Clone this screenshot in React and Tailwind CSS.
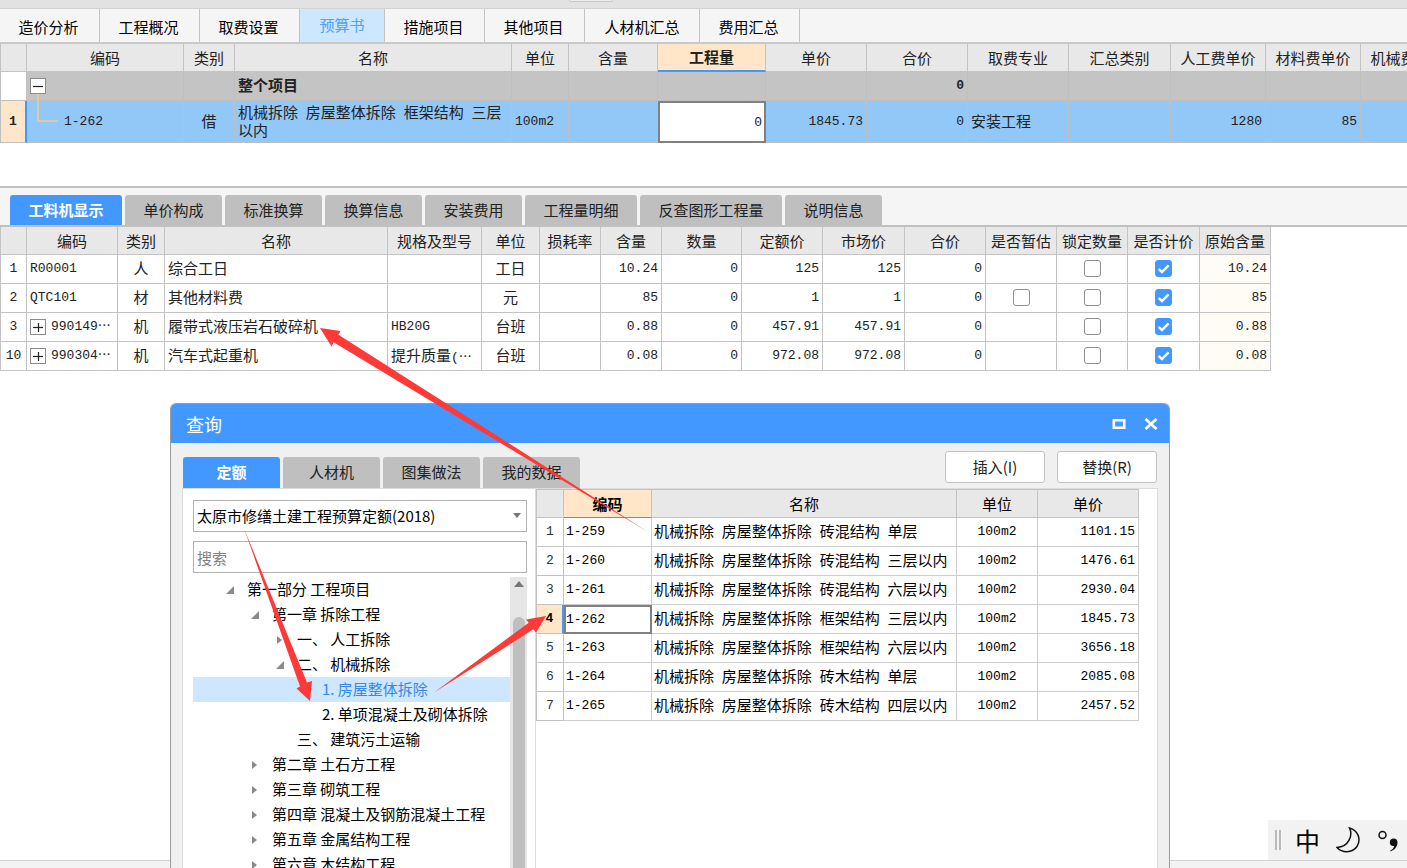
import React, { useState } from "react";

const UI = "font-['Noto_Sans_CJK_SC',sans-serif]";
const GRID = "font-['Liberation_Mono','Noto_Sans_CJK_SC',monospace] text-[13px]";

/* Latin runs use the narrow grid face, Chinese runs the larger UI face. */
function Mixed({ text }) {
  const runs = String(text).match(/[\u2e80-\uffff]+|[^\u2e80-\uffff]+/g) || [];
  return runs.map((run, i) =>
    /[\u2e80-\uffff]/.test(run) ? (
      <span key={i} className="font-['Noto_Sans_CJK_SC',sans-serif] text-[15px]">{run}</span>
    ) : (
      <React.Fragment key={i}>{run}</React.Fragment>
    )
  );
}

function Cols({ widths }) {
  return (
    <colgroup>
      {widths.map((w, i) => (
        <col key={i} style={{ width: w }} />
      ))}
    </colgroup>
  );
}

function Expander({ open, label }) {
  return (
    <button type="button" aria-label={label} className="grid size-4 shrink-0 place-items-center border border-[#8c8c8c] bg-white">
      <svg viewBox="0 0 10 10" className="size-[10px]" stroke="#222" strokeWidth="1.2">
        <path d="M0 5.5h10" />
        {!open && <path d="M5.5 1v9" />}
      </svg>
    </button>
  );
}

function Tick({ on, label }) {
  const [checked, setChecked] = useState(on);
  return (
    <label className="relative inline-grid size-[17px] place-items-center align-middle">
      <input
        type="checkbox"
        aria-label={label}
        checked={checked}
        onChange={() => setChecked(!checked)}
        className="size-[17px] appearance-none rounded-[3px] border border-[#8f8f8f] bg-white checked:border-[#4398ff] checked:bg-[#4398ff]"
      />
      {checked && (
        <svg viewBox="0 0 17 17" className="pointer-events-none absolute inset-0 size-[17px]" fill="none" stroke="#fff" strokeWidth="2.4">
          <path d="M3.6 8.8 7 12l6.6-6.6" />
        </svg>
      )}
    </label>
  );
}

const topTabs = ["造价分析", "工程概况", "取费设置", "预算书", "措施项目", "其他项目", "人材机汇总", "费用汇总"];
const budgetHead = ["", "编码", "类别", "名称", "单位", "含量", "工程量", "单价", "合价", "取费专业", "汇总类别", "人工费单价", "材料费单价", "机械费单价"];
const budgetCols = [27, 157, 51, 277, 57, 89, 108, 101, 101, 101, 102, 95, 95, 95];

function BudgetTable() {
  const c = "border-r border-b border-[#bfbfbf]";
  return (
    <div className="shrink-0 overflow-hidden">
      <table className={`w-[1456px] table-fixed border-separate border-spacing-0 text-[#222] ${GRID}`}>
        <Cols widths={budgetCols} />
        <thead>
          <tr className="h-[28px]">
            {budgetHead.map((h, i) => (
              <th
                key={i}
                className={`border-r whitespace-nowrap p-0 pt-[2px] ${
                  h === "工程量" ? "border-b-2 border-r-[#c3c3c3] border-b-[#4398ff] bg-[#ffe6c8] font-bold" : "border-b border-[#c3c3c3] bg-[#e8e8e8] font-normal"
                } ${i === 0 ? "border-l" : ""}`}
              >
                <Mixed text={h} />
              </th>
            ))}
          </tr>
        </thead>
        <tbody>
          <tr className="h-[29px] bg-[#c4c4c4] font-bold">
            <td className={`${c} border-l bg-white p-0`} />
            <td className={`${c} relative p-0 pl-[3px]`}>
              <Expander open label="折叠" />
              <svg className="pointer-events-none absolute top-[22px] left-[10px] h-8 w-6" fill="none" stroke="#f3c98c" strokeWidth="1.5">
                <path d="M1 0v27h20" />
              </svg>
            </td>
            <td className={c} />
            <td className={`${c} p-0 pl-[3px]`}><Mixed text="整个项目" /></td>
            <td className={c} />
            <td className={c} />
            <td className={c} />
            <td className={c} />
            <td className={`${c} p-0 pr-[3px] text-right`}>0</td>
            <td className={c} />
            <td className={c} />
            <td className={c} />
            <td className={c} />
            <td className={c} />
          </tr>
          <tr className="h-[42px] bg-[#92c8f7]">
            <td className="border-x border-r-2 border-b border-[#bfbfbf] border-r-[#4398ff] bg-[#ffe6c8] p-0 text-center font-bold">1</td>
            <td className={`${c} p-0 pl-[37px]`}>1-262</td>
            <td className={`${c} p-0 text-center`}><Mixed text="借" /></td>
            <td className={`${c} p-0 pl-[3px] leading-[15px]`}><Mixed text="机械拆除 房屋整体拆除 框架结构 三层以内" /></td>
            <td className={`${c} p-0 pl-[3px]`}>100m2</td>
            <td className={c} />
            <td className="p-0">
              <input aria-label="工程量" defaultValue="0" className="block h-[42px] w-full border-2 border-[#808080] bg-white pr-[2px] text-right outline-none" />
            </td>
            <td className={`${c} p-0 pr-[3px] text-right`}>1845.73</td>
            <td className={`${c} p-0 pr-[3px] text-right`}>0</td>
            <td className={`${c} p-0 pl-[3px]`}><Mixed text="安装工程" /></td>
            <td className={c} />
            <td className={`${c} p-0 pr-[3px] text-right`}>1280</td>
            <td className={`${c} p-0 pr-[3px] text-right`}>85</td>
            <td className={c} />
          </tr>
        </tbody>
      </table>
    </div>
  );
}

const detailTabs = [
  ["工料机显示", "w-[112px]"],
  ["单价构成", "w-[97px]"],
  ["标准换算", "w-[97px]"],
  ["换算信息", "w-[97px]"],
  ["安装费用", "w-[97px]"],
  ["工程量明细", "w-[112px]"],
  ["反查图形工程量", "w-[142px]"],
  ["说明信息", "w-[97px]"],
];
const detailHead = ["", "编码", "类别", "名称", "规格及型号", "单位", "损耗率", "含量", "数量", "定额价", "市场价", "合价", "是否暂估", "锁定数量", "是否计价", "原始含量"];
const detailCols = [27, 91, 47, 223, 94, 58, 61, 61, 80, 81, 82, 81, 71, 71, 72, 71];
const detailRows = [
  { n: 1, code: "R00001", kind: "人", name: "综合工日", spec: "", unit: "工日", qty: "10.24", p: "125" },
  { n: 2, code: "QTC101", kind: "材", name: "其他材料费", spec: "", unit: "元", qty: "85", p: "1", est: true },
  { n: 3, code: "990149⋯", kind: "机", name: "履带式液压岩石破碎机", spec: "HB20G", unit: "台班", qty: "0.88", p: "457.91", tree: true },
  { n: 10, code: "990304⋯", kind: "机", name: "汽车式起重机", spec: "提升质量(⋯", unit: "台班", qty: "0.08", p: "972.08", tree: true },
];

function DetailTable() {
  const c = "border-r border-b border-[#c3c3c3] p-0 whitespace-nowrap overflow-hidden";
  const num = `${c} pr-[3px] text-right`;
  return (
    <table className={`w-[1271px] shrink-0 table-fixed border-separate border-spacing-0 text-[#222] ${GRID}`}>
      <Cols widths={detailCols} />
      <thead>
        <tr className="h-[28px] bg-[#e8e8e8]">
          {detailHead.map((h, i) => (
            <th key={i} className={`${c} pt-[2px] font-normal ${i === 0 ? "border-l" : ""}`}><Mixed text={h} /></th>
          ))}
        </tr>
      </thead>
      <tbody>
        {detailRows.map((r) => (
          <tr key={r.n} className="h-[29px]">
            <td className={`${c} border-l text-center`}>{r.n}</td>
            <td className={`${c} pl-[3px]`}>
              <div className="flex items-center gap-[5px]">
                {r.tree && <Expander label="展开" />}
                {r.code}
              </div>
            </td>
            <td className={`${c} text-center`}><Mixed text={r.kind} /></td>
            <td className={`${c} pl-[3px]`}><Mixed text={r.name} /></td>
            <td className={`${c} pl-[3px]`}><Mixed text={r.spec} /></td>
            <td className={`${c} text-center`}><Mixed text={r.unit} /></td>
            <td className={c} />
            <td className={num}>{r.qty}</td>
            <td className={num}>0</td>
            <td className={num}>{r.p}</td>
            <td className={num}>{r.p}</td>
            <td className={num}>0</td>
            <td className={`${c} text-center`}>{r.est && <Tick label="是否暂估" on={false} />}</td>
            <td className={`${c} text-center`}><Tick label="锁定数量" on={false} /></td>
            <td className={`${c} text-center`}><Tick label="是否计价" on={true} /></td>
            <td className={`${num} bg-[#fffbf5]`}>{r.qty}</td>
          </tr>
        ))}
      </tbody>
    </table>
  );
}

const tree = [
  { t: "第一部分 工程项目", pad: "pl-8", a: "open" },
  { t: "第一章 拆除工程", pad: "pl-[57px]", a: "open" },
  { t: "一、 人工拆除", pad: "pl-[82px]", a: "closed" },
  { t: "二、 机械拆除", pad: "pl-[82px]", a: "open" },
  { t: "1. 房屋整体拆除", pad: "pl-[107px]", sel: true },
  { t: "2. 单项混凝土及砌体拆除", pad: "pl-[107px]" },
  { t: "三、 建筑污土运输", pad: "pl-[82px]" },
  { t: "第二章 土石方工程", pad: "pl-[57px]", a: "closed" },
  { t: "第三章 砌筑工程", pad: "pl-[57px]", a: "closed" },
  { t: "第四章 混凝土及钢筋混凝土工程", pad: "pl-[57px]", a: "closed" },
  { t: "第五章 金属结构工程", pad: "pl-[57px]", a: "closed" },
  { t: "第六章 木结构工程", pad: "pl-[57px]", a: "closed" },
];

function TreeArrow({ state }) {
  return (
    <svg viewBox="0 0 10 10" className="size-[10px] shrink-0" fill="#8a8a8a">
      {state === "open" && <path d="M9 1v8H1z" />}
      {state === "closed" && <path d="M2 1l5 4-5 4z" />}
    </svg>
  );
}

const quotaRows = [
  ["1-259", "机械拆除 房屋整体拆除 砖混结构 单层", "1101.15"],
  ["1-260", "机械拆除 房屋整体拆除 砖混结构 三层以内", "1476.61"],
  ["1-261", "机械拆除 房屋整体拆除 砖混结构 六层以内", "2930.04"],
  ["1-262", "机械拆除 房屋整体拆除 框架结构 三层以内", "1845.73"],
  ["1-263", "机械拆除 房屋整体拆除 框架结构 六层以内", "3656.18"],
  ["1-264", "机械拆除 房屋整体拆除 砖木结构 单层", "2085.08"],
  ["1-265", "机械拆除 房屋整体拆除 砖木结构 四层以内", "2457.52"],
];

function QuotaTable() {
  const c = "border-r border-b border-[#cdcdcd] p-0 whitespace-nowrap";
  return (
    <table className={`w-[603px] table-fixed border-separate border-spacing-0 text-black ${GRID}`}>
      <Cols widths={[28, 88, 305, 81, 101]} />
      <thead>
        <tr className="h-[29px] bg-[#e8e8e8]">
          {["", "编码", "名称", "单位", "单价"].map((h, i) => (
            <th
              key={i}
              className={`border-t border-r border-b p-0 pt-[2px] ${
                i === 1 ? "border-[#c3c3c3] border-b-[#4398ff] bg-[#ffe6c8] font-bold" : "border-[#c3c3c3] font-normal"
              } ${i === 0 ? "border-l" : ""}`}
            >
              <Mixed text={h} />
            </th>
          ))}
        </tr>
      </thead>
      <tbody>
        {quotaRows.map(([code, name, price], i) => {
          const sel = code === "1-262";
          return (
            <tr key={code} className="h-[29px]">
              <td
                className={`border-b border-l border-[#c3c3c3] p-0 text-center ${
                  sel ? "border-r-2 border-r-[#4398ff] bg-[#ffe6c8] font-bold" : "border-r text-[#333]"
                }`}
              >
                {i + 1}
              </td>
              <td className={sel ? "border-2 border-[#808080] p-0" : `${c} pl-[2px]`}>{code}</td>
              <td className={`${c} pl-[2px]`}><Mixed text={name} /></td>
              <td className={`${c} text-center`}>100m2</td>
              <td className={`${c} pr-[3px] text-right`}>{price}</td>
            </tr>
          );
        })}
      </tbody>
    </table>
  );
}

function QueryDialog() {
  return (
    <section
      role="dialog"
      aria-label="查询"
      className="absolute top-[403px] bottom-0 left-[170px] flex w-[1000px] flex-col overflow-hidden rounded-t-md border-x border-t border-[#9c9c9c] bg-[#f0f0f0]"
    >
      <header className="flex h-[39px] shrink-0 items-center bg-[#4398ff] pr-[11px] pl-[15px] text-white">
        <h2 className="grow text-lg">查询</h2>
        <button type="button" aria-label="最大化" className="mr-[18px]">
          <svg viewBox="0 0 14 14" className="size-[14px]" fill="none" stroke="#fff" strokeWidth="2.6">
            <path d="M1.800 3.300h10.400v7.400H1.800z" />
          </svg>
        </button>
        <button type="button" aria-label="关闭">
          <svg viewBox="0 0 14 14" className="size-[14px]" stroke="#fff" strokeWidth="2.8">
            <path d="M1.5 2l11 10M12.5 2l-11 10" />
          </svg>
        </button>
      </header>
      <div className="flex h-[45px] shrink-0 items-end gap-[3px] px-3 text-[15px]">
        {["定额", "人材机", "图集做法", "我的数据"].map((t, i) => (
          <button
            key={t}
            type="button"
            className={`h-[31px] w-[97px] rounded-t-[3px] ${i === 0 ? "bg-[#4398ff] font-bold text-white" : "bg-[#bfbfbf] text-[#222]"}`}
          >
            {t}
          </button>
        ))}
        <div className="mb-[5px] ml-auto flex gap-3">
          <button type="button" className="h-8 w-[100px] rounded-[3px] border border-[#c3c3c3] bg-white text-[#222]">插入(I)</button>
          <button type="button" className="h-8 w-[100px] rounded-[3px] border border-[#c3c3c3] bg-white text-[#222]">替换(R)</button>
        </div>
      </div>
      <div className="mx-[11px] flex min-h-0 grow border-x border-t border-[#dcdcdc] bg-white">
        <div className="flex w-[352px] shrink-0 flex-col pt-[11px] pr-2 pl-[10px] text-[15px]">
          <div className="relative shrink-0">
            <select aria-label="定额库" className="block h-8 w-full appearance-none border border-[#b3b3b3] bg-white pl-[3px] text-black outline-none">
              <option>太原市修缮土建工程预算定额(2018)</option>
            </select>
            <svg viewBox="0 0 8 5" className="pointer-events-none absolute top-[13px] right-[6px] h-[5px] w-2" fill="#777">
              <path d="M0 0h8L4 5z" />
            </svg>
          </div>
          <input
            aria-label="搜索"
            placeholder="搜索"
            className="mt-[9px] h-8 w-full shrink-0 border border-[#b3b3b3] bg-white pl-[3px] outline-none placeholder:text-[#808080]"
          />
          <div className="mt-1 flex min-h-0 grow">
            <ul className="min-w-0 grow overflow-hidden text-black">
              {tree.map((n) => (
                <li key={n.t}>
                  <button
                    type="button"
                    className={`flex h-[25px] w-full items-center gap-3 whitespace-nowrap ${n.pad} ${n.sel ? "bg-[#cce7ff] text-[#3a86ea]" : ""}`}
                  >
                    <TreeArrow state={n.a} />
                    {n.t}
                  </button>
                </li>
              ))}
            </ul>
            <div className="flex w-[17px] shrink-0 flex-col items-center bg-[#e6e6e6] pt-1">
              <svg viewBox="0 0 10 6" className="h-[6px] w-[10px] shrink-0" fill="#777">
                <path d="M0 6h10L5 0z" />
              </svg>
              <div className="mt-[30px] w-3 grow rounded-t-md bg-[#bfbfbf]" />
            </div>
          </div>
        </div>
        <div className="min-w-0 grow border-l border-[#dcdcdc]">
          <QuotaTable />
        </div>
      </div>
    </section>
  );
}

function Arrows() {
  return (
    <svg viewBox="0 0 720 720" className="pointer-events-none absolute top-0 left-0 size-[720px]" fill="#fd3a38">
      <path d="M320 328 340.5 331 338.4 334.7 648 532 333.6 342.3 331.5 346.5z" />
      <path d="M310 701 296.5 688.5 300 686.5 244 528.5 307 682.5 312 681z" />
      <path d="M546 616 526 619.5 528.7 622.7 434 692.5 533.3 629.3 536 632.5z" />
    </svg>
  );
}

export default function App() {
  return (
    <main className={`relative flex h-screen flex-col overflow-hidden bg-white ${UI}`}>
      <div className="h-[9px] shrink-0 border-b border-[#d2d2d2] bg-[#e2e2e2]">
        <div className="ml-[569px] h-[2px] w-11 rounded-b-sm border-x border-b border-[#c8c8c8] bg-[#ececec]" />
      </div>
      <nav className="flex h-[35px] shrink-0 border-b-2 border-[#c9c9c9] bg-[#f5f5f5] text-[15px] text-black">
        {topTabs.map((t) => (
          <button
            key={t}
            type="button"
            className={`border-r border-[#c3c3c3] ${
              t === "预算书" ? "w-[85px] bg-[#cce7ff] text-[#4f9ffb]" : t === "人材机汇总" ? "w-[115px] pt-[3px]" : "w-[100px] pt-[3px] pr-[2px]"
            }`}
          >
            {t}
          </button>
        ))}
      </nav>
      <BudgetTable />
      <div className="mt-[43px] flex h-[41px] shrink-0 items-end gap-[3px] border-t-2 border-b-2 border-[#c0c0c0] bg-[#f5f5f5] pl-[10px] text-[15px]">
        {detailTabs.map(([t, w], i) => (
          <button
            key={t}
            type="button"
            className={`h-[30px] rounded-t-[3px] ${w} ${i === 0 ? "bg-[#4398ff] font-bold text-white" : "bg-[#bfbfbf] text-[#222]"}`}
          >
            {t}
          </button>
        ))}
      </div>
      <DetailTable />
      <div className="mt-auto flex h-10 w-[139px] shrink-0 items-center self-end bg-[#f2f2f2] pl-[7px] text-black">
        <svg viewBox="0 0 6 20" className="h-5 w-[6px]" stroke="#a8a8a8" strokeWidth="1.5">
          <path d="M1 0v20M5 0v20" />
        </svg>
        <span className="ml-[14px] text-[25px] leading-none">中</span>
        <svg viewBox="0 0 24 26" className="ml-4 h-[26px] w-6" fill="none" stroke="#111" strokeWidth="1.5">
          <path d="M13.5 1C17 8 13 20 1 20.5 6 26 16 26.500 21 19.500 25.500 12 22 3.500 13.500 1z" />
        </svg>
        <svg viewBox="0 0 20 24" className="ml-[18px] h-6 w-5">
          <circle cx="4.500" cy="7" r="3.500" fill="none" stroke="#111" strokeWidth="1.500" />
          <path d="M15.500 10.500c2.800 0 4.300 2 4 4.800-.4 3.700-3 6.800-7 8.200l-.4-.8c2.300-1.300 3.700-2.800 4-4.800-2.400.6-4.300-1-4.300-3.500 0-2.200 1.600-3.900 3.700-3.900z" fill="#111" />
        </svg>
      </div>
      <footer className="h-2 shrink-0 border-t border-[#d2d2d2] bg-[#f3f3f3]" />
      <QueryDialog />
      <Arrows />
    </main>
  );
}
